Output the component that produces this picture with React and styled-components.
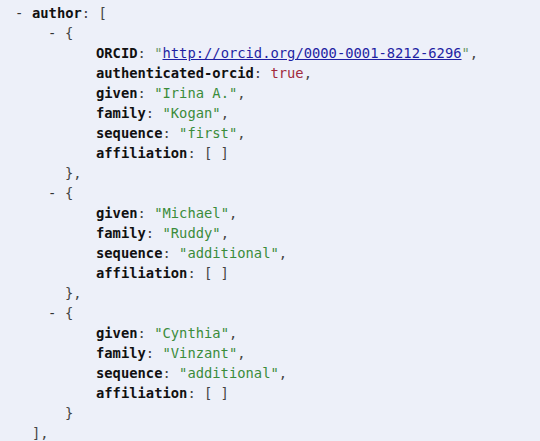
import styled, { createGlobalStyle } from 'styled-components';

const GlobalStyle = createGlobalStyle`
  html, body {
    margin: 0;
    padding: 0;
    background: #edf0f9;
  }
`;

const Viewer = styled.div`
  font-family: "DejaVu Sans Mono", "Liberation Mono", monospace;
  font-size: 13.8px;
  line-height: 20px;
  color: #333;
  padding: 3px 0 0 15px;
  white-space: pre;
  min-height: 441px;
  box-sizing: border-box;
`;

const Entry = styled.div`
  display: flex;
`;

const Dash = styled.span`
  width: 17px;
  flex-shrink: 0;
  color: #333;
`;

const Body = styled.div`
  display: flex;
  flex-direction: column;
`;

const Line = styled.div`
  height: 20px;
`;

const Nested = styled.div`
  padding-left: ${(p) => p.$indent}px;
`;

const Key = styled.span`
  font-weight: bold;
  color: #111;
`;

const Punct = styled.span`
  color: #444;
`;

const Str = styled.span`
  color: #3b8c3b;
`;

const Quote = styled.span`
  color: #6a9a6a;
`;

const Link = styled.a`
  color: #1f1fa3;
  text-decoration: underline;
`;

const Bool = styled.span`
  color: #a12a3c;
`;

const authors = [
  {
    ORCID: 'http://orcid.org/0000-0001-8212-6296',
    'authenticated-orcid': true,
    given: 'Irina A.',
    family: 'Kogan',
    sequence: 'first',
    affiliation: [],
  },
  { given: 'Michael', family: 'Ruddy', sequence: 'additional', affiliation: [] },
  { given: 'Cynthia', family: 'Vinzant', sequence: 'additional', affiliation: [] },
];

function Value({ value }) {
  if (Array.isArray(value)) return <Punct>[ ]</Punct>;
  if (typeof value === 'boolean') return <Bool>{String(value)}</Bool>;
  if (value.startsWith('http')) {
    return (
      <>
        <Quote>"</Quote>
        <Link href={value}>{value}</Link>
        <Quote>"</Quote>
      </>
    );
  }
  return <Str>"{value}"</Str>;
}

function Property({ name, value, last }) {
  return (
    <Line>
      <Key>{name}</Key>
      <Punct>: </Punct>
      <Value value={value} />
      {!last && <Punct>,</Punct>}
    </Line>
  );
}

function ObjectEntry({ data, last }) {
  const keys = Object.keys(data);
  return (
    <Entry>
      <Dash>-</Dash>
      <Body>
        <Line>
          <Punct>{'{'}</Punct>
        </Line>
        <Nested $indent={31}>
          {keys.map((k, i) => (
            <Property key={k} name={k} value={data[k]} last={i === keys.length - 1} />
          ))}
        </Nested>
        <Line>
          <Punct>{last ? '}' : '},'}</Punct>
        </Line>
      </Body>
    </Entry>
  );
}

export default function App() {
  return (
    <>
      <GlobalStyle />
      <Viewer>
        <Entry>
          <Dash>-</Dash>
          <Body>
            <Line>
              <Key>author</Key>
              <Punct>: [</Punct>
            </Line>
            <Nested $indent={16}>
              {authors.map((a, i) => (
                <ObjectEntry key={a.given} data={a} last={i === authors.length - 1} />
              ))}
            </Nested>
            <Line>
              <Punct>],</Punct>
            </Line>
          </Body>
        </Entry>
      </Viewer>
    </>
  );
}
